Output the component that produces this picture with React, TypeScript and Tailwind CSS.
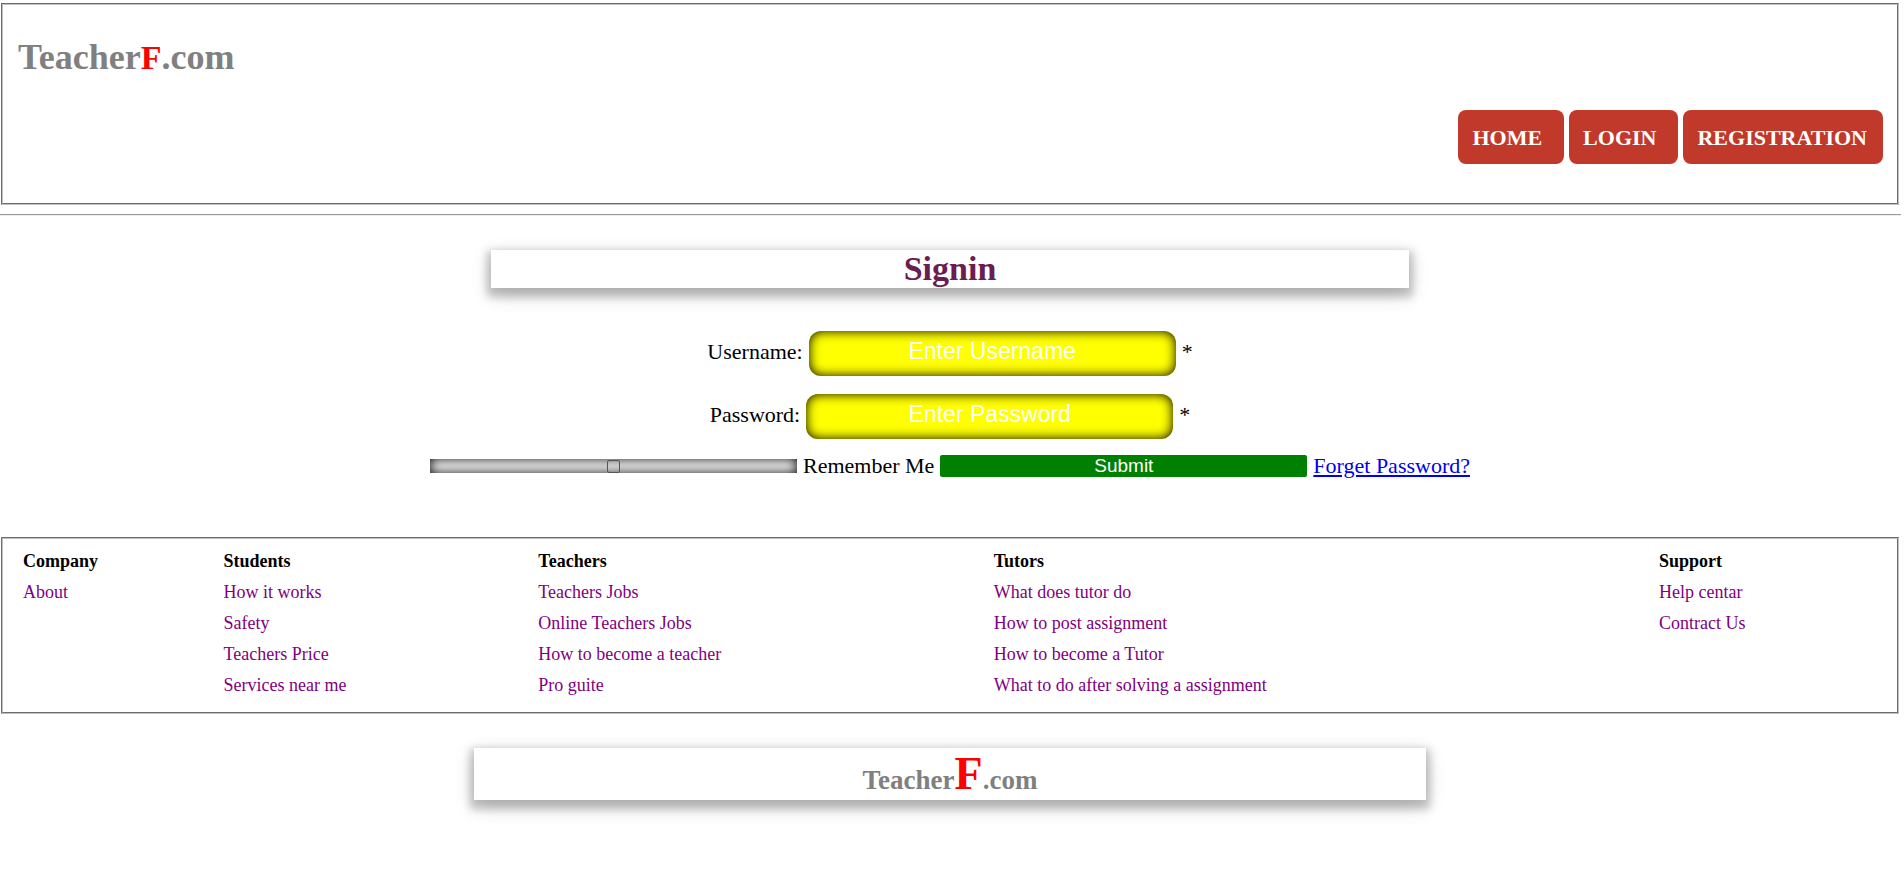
type Column = { title: string; width: string; links: string[] };

const columns: Column[] = [
  { title: "Company", width: "w-[10.7%]", links: ["About"] },
  { title: "Students", width: "w-[16.8%]", links: ["How it works", "Safety", "Teachers Price", "Services near me"] },
  { title: "Teachers", width: "w-[24.3%]", links: ["Teachers Jobs", "Online Teachers Jobs", "How to become a teacher", "Pro guite"] },
  { title: "Tutors", width: "w-[35.5%]", links: ["What does tutor do", "How to post assignment", "How to become a Tutor", "What to do after solving a assignment"] },
  { title: "Support", width: "w-[12.7%]", links: ["Help centar", "Contract Us"] },
];

const nav = [
  { label: "HOME", pad: "pr-[22px]" },
  { label: "LOGIN", pad: "pr-[22px]" },
  { label: "REGISTRATION", pad: "pr-4" },
];

const raised = "shadow-[0_5px_8px_4px_rgba(0,0,0,0.2),0_6px_20px_0_rgba(0,0,0,0.19)] bg-white";
const panel = "ml-px mr-[5px] border-2 [border-style:groove] border-[#c0c0c0]";
const field =
  "h-[45px] w-[367px] rounded-[12px] bg-[#ffff00] px-2 pb-1 text-center font-['Liberation_Sans',sans-serif] text-[23px] leading-7 text-white outline-none placeholder:text-white placeholder:opacity-100 shadow-[inset_0_0_12px_#000]";

export default function App() {
  return (
    <div className="bg-white pt-[3px] font-['Liberation_Serif',serif] text-black">
      <header className={`${panel} flex h-[202px] flex-col px-[14px] pb-[39px]`}>
        <h1 className="pt-8 pl-px text-[36px] leading-[41px] font-bold text-[#808080]">
          Teacher<span className="text-[34px] text-[#ff0000]">F</span>.com
        </h1>
        <nav className="mt-auto flex justify-end gap-[5px]">
          {nav.map((item) => (
            <a
              key={item.label}
              href="#"
              className={`${item.pad} flex h-[54px] items-center rounded-lg bg-[#c0392b] pl-[14px] text-[22px] font-bold text-white`}
            >
              {item.label}
            </a>
          ))}
        </nav>
      </header>

      <hr className="mt-[9px] mr-[3px] border-t border-b border-t-[#9a9a9a] border-b-[#eeeeee]" />

      <main className="pr-1">
        <div className={`${raised} mx-[491px] mt-[34px] h-[38px] text-center`}>
          <h2 className="text-[34px] leading-[38px] font-bold text-[#6b1d4f]">Signin</h2>
        </div>

        <form className="mt-[43px] text-[22px]" onSubmit={(e) => e.preventDefault()}>
          <div className="flex items-center justify-center gap-[6px]">
            <label htmlFor="username" className="pb-1">Username:</label>
            <input id="username" type="text" placeholder="Enter Username" className={field} />
            <span className="pb-1">*</span>
          </div>
          <div className="mt-[18px] flex items-center justify-center gap-[6px]">
            <label htmlFor="password" className="pb-1">Password:</label>
            <input id="password" type="password" placeholder="Enter Password" className={field} />
            <span className="pb-1">*</span>
          </div>
          <div className="mt-[10px] flex h-[34px] items-center justify-center gap-[6px]">
            <span className="flex h-[14px] w-[367px] items-center justify-center bg-white shadow-[inset_0_0_12px_#000]">
              <input
                id="remember"
                type="checkbox"
                className="size-[13px] appearance-none rounded-[2px] border border-[#555555] checked:bg-[#555555]"
              />
            </span>
            <label htmlFor="remember" className="pb-0.5">Remember Me</label>
            <button
              type="submit"
              className="h-[22px] w-[367px] rounded-[2px] bg-[#008000] font-['Liberation_Sans',sans-serif] text-[19px] leading-[22px] text-white"
            >
              Submit
            </button>
            <a href="#" className="pb-0.5 text-[#0000ee] underline">
              Forget Password?
            </a>
          </div>
        </form>
      </main>

      <footer className="pb-12">
        <div className={`${panel} mt-[54px] flex h-[177px] pt-[7px] pl-5`}>
          {columns.map((column) => (
            <section key={column.title} className={column.width}>
              <h3 className="text-[18px] leading-[31px] font-bold">{column.title}</h3>
              <ul>
                {column.links.map((link) => (
                  <li key={link} className="text-[18px] leading-[31px]">
                    <a href="#" className="text-[#800080]">
                      {link}
                    </a>
                  </li>
                ))}
              </ul>
            </section>
          ))}
        </div>
        <div className={`${raised} mt-[34px] mr-[478px] ml-[474px] h-[52px] text-center text-[27px] leading-[52px] font-bold text-[#808080]`}>
          Teacher<span className="text-[46px] text-[#ff0000]">F</span>.com
        </div>
      </footer>
    </div>
  );
}
